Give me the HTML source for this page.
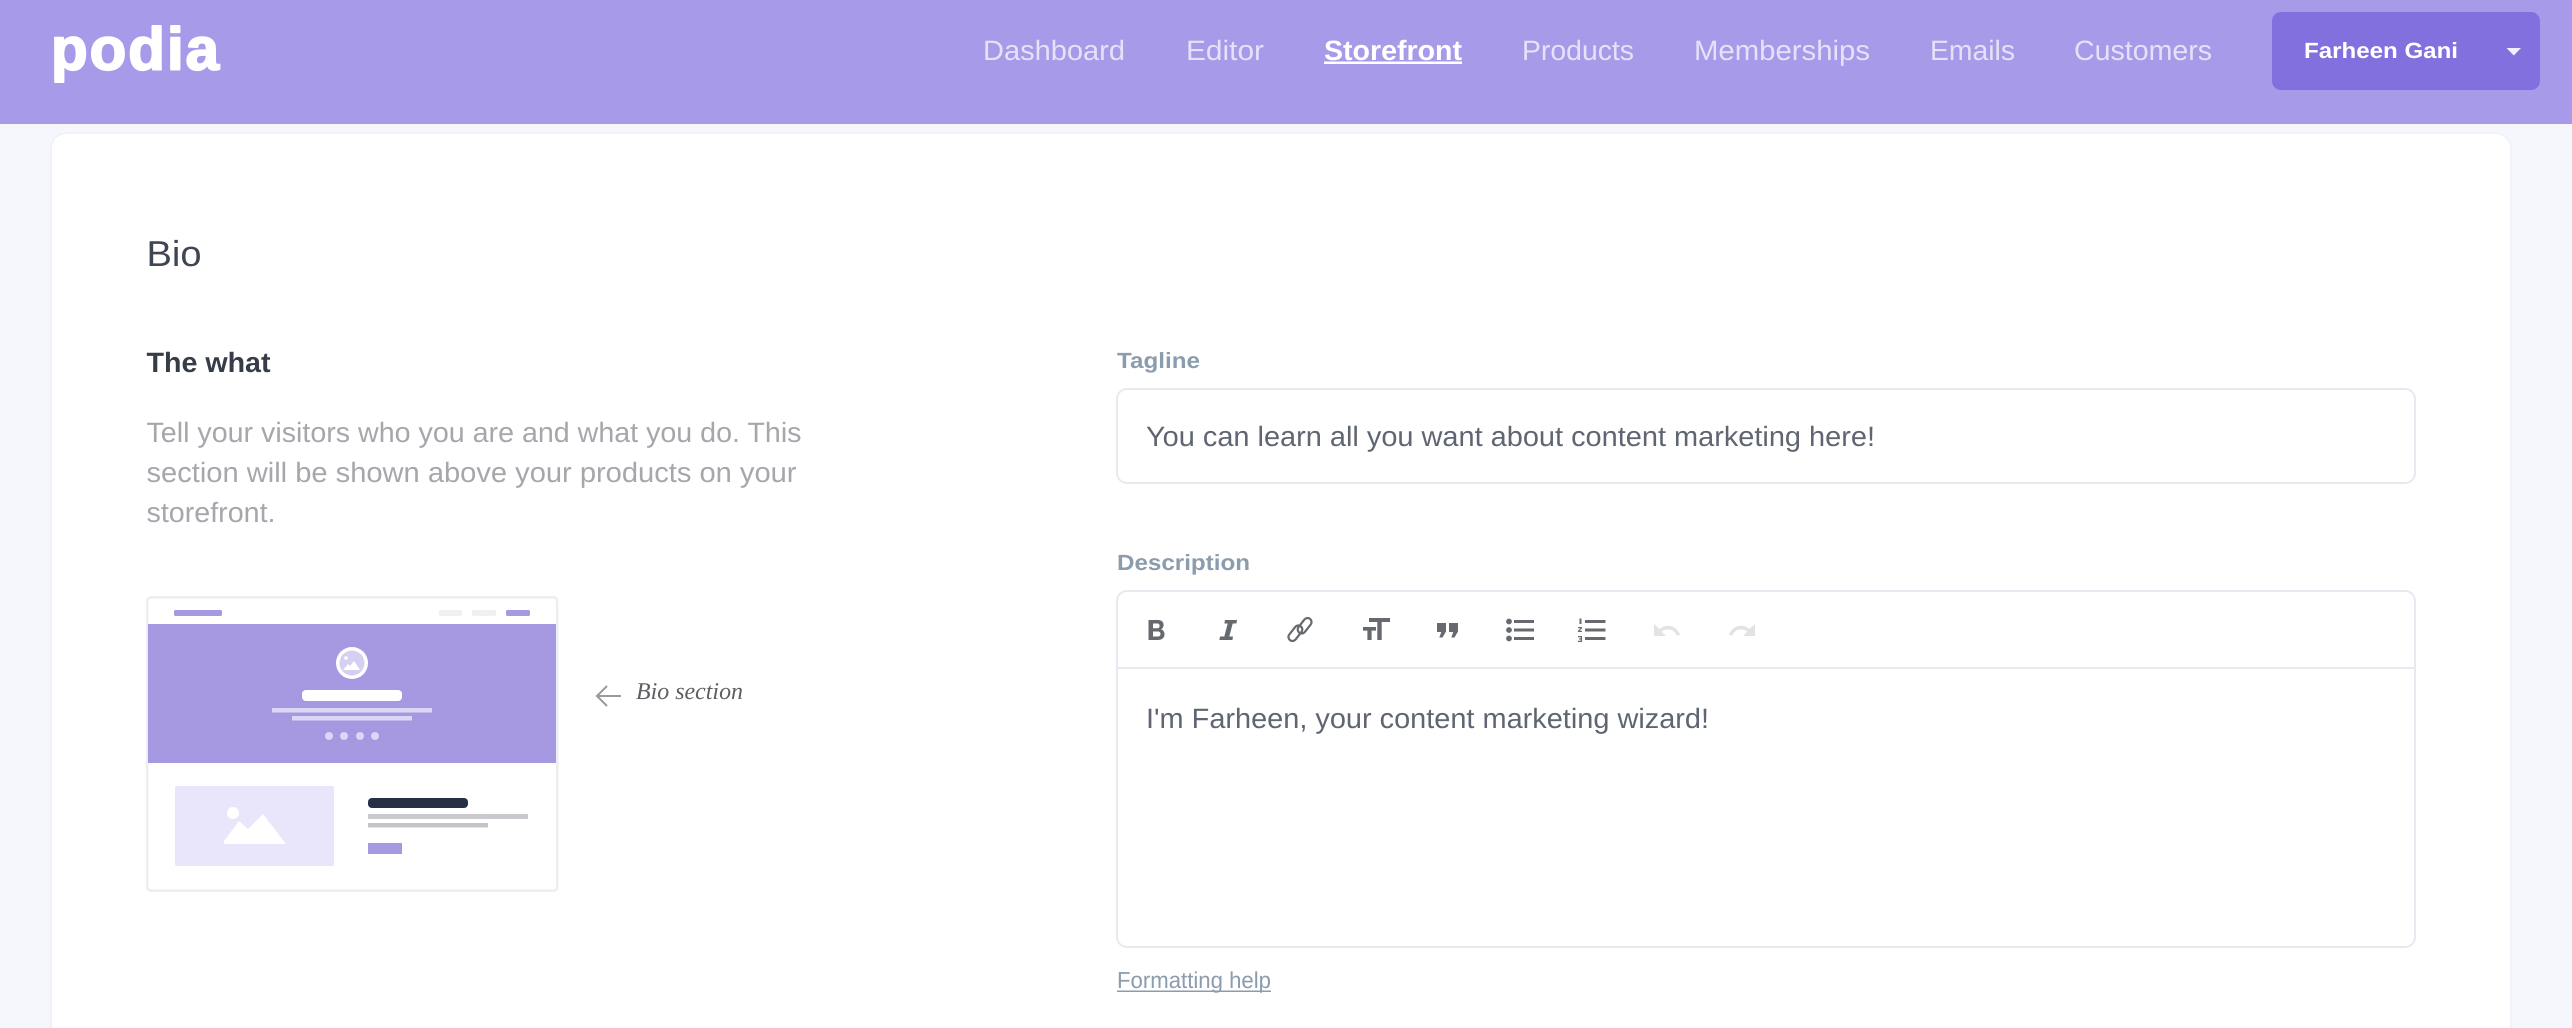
<!DOCTYPE html>
<html>
<head>
<meta charset="utf-8">
<title>Podia</title>
<style>
html,body{margin:0;padding:0;width:2572px;height:1028px;overflow:hidden;background:#f6f7fc}
svg{display:block}
text{font-family:"Liberation Sans",sans-serif;text-rendering:geometricPrecision}
.nav{font-size:28px;fill:#e5e1f8}
.para{font-size:28px;fill:#a6a7ac}
.val{font-size:28px;fill:#5f6672}
.lab{font-size:22px;font-weight:700;fill:#8b9cad}
</style>
</head>
<body>
<svg width="2572" height="1028" viewBox="0 0 2572 1028" xmlns="http://www.w3.org/2000/svg">
<!-- page -->
<rect width="2572" height="1028" fill="#f6f7fc"/>
<path d="M50.500 1028V148a15.500 15.500 0 0 1 15.500-15.500H2496a15.500 15.500 0 0 1 15.500 15.500V1028z" fill="#f0f1f8"/>
<path d="M52 1028V148a14 14 0 0 1 14-14H2496a14 14 0 0 1 14 14V1028z" fill="#fff"/>
<!-- header -->
<rect width="2572" height="124" fill="#a79ae8"/>
<text x="51" y="69.500" font-size="60" font-weight="700" fill="#fff" stroke="#fff" stroke-width="2" stroke-linejoin="round" textLength="168" lengthAdjust="spacing">podia</text>

<text class="nav" x="983" y="60" textLength="142" lengthAdjust="spacingAndGlyphs">Dashboard</text>
<text class="nav" x="1186" y="60" textLength="78" lengthAdjust="spacingAndGlyphs">Editor</text>
<text x="1324" y="60" font-size="28" font-weight="700" fill="#fff" textLength="138" lengthAdjust="spacingAndGlyphs">Storefront</text>
<rect x="1324" y="61.500" width="138" height="2.500" fill="#fff"/>
<text class="nav" x="1522" y="60" textLength="112" lengthAdjust="spacingAndGlyphs">Products</text>
<text class="nav" x="1694" y="60" textLength="176" lengthAdjust="spacingAndGlyphs">Memberships</text>
<text class="nav" x="1930" y="60" textLength="85" lengthAdjust="spacingAndGlyphs">Emails</text>
<text class="nav" x="2074" y="60" textLength="138" lengthAdjust="spacingAndGlyphs">Customers</text>

<rect x="2272" y="12" width="268" height="78" rx="9" fill="#8370df"/>
<text x="2304" y="58" font-size="22" font-weight="700" fill="#fff" textLength="154" lengthAdjust="spacingAndGlyphs">Farheen Gani</text>
<path d="M2506.500 48h14.500l-7.200 7.500z" fill="#f2f0fc"/>

<!-- left column -->
<text x="146.500" y="266" font-size="36" fill="#3f4653" textLength="55" lengthAdjust="spacingAndGlyphs">Bio</text>
<text x="146.500" y="372" font-size="28" font-weight="700" fill="#363c48" textLength="124" lengthAdjust="spacingAndGlyphs">The what</text>
<text class="para" x="146.500" y="442" textLength="655" lengthAdjust="spacingAndGlyphs">Tell your visitors who you are and what you do. This</text>
<text class="para" x="146.500" y="482" textLength="650" lengthAdjust="spacingAndGlyphs">section will be shown above your products on your</text>
<text class="para" x="146.500" y="522" textLength="129" lengthAdjust="spacingAndGlyphs">storefront.</text>

<!-- illustration -->
<rect x="147.200" y="597.200" width="410" height="293.600" rx="4" fill="#fff" stroke="#eceef1" stroke-width="2.500"/>
<rect x="174" y="610" width="48" height="6" rx="1.500" fill="#a699e2"/>
<rect x="439" y="610" width="23" height="6" rx="1.500" fill="#f0f0f2"/>
<rect x="472" y="610" width="24" height="6" rx="1.500" fill="#f0f0f2"/>
<rect x="506" y="610" width="24" height="6" rx="1.500" fill="#a699e2"/>
<rect x="148" y="624" width="408" height="139" fill="#a699e2"/>
<circle cx="352" cy="663" r="16" fill="#fff"/>
<circle cx="352" cy="663" r="12.500" fill="#d5cff3"/>
<circle cx="346" cy="658" r="1.800" fill="#fff"/>
<path d="M343 670l5-6 2 2 4-5 6 9z" fill="#fff"/>
<rect x="302" y="690" width="100" height="11" rx="4" fill="#fff"/>
<rect x="272" y="708" width="160" height="4.500" fill="#dcd7f4"/>
<rect x="292" y="716" width="120" height="4.500" fill="#dcd7f4"/>
<circle cx="329" cy="736" r="4" fill="#dcd7f4"/>
<circle cx="344" cy="736" r="4" fill="#dcd7f4"/>
<circle cx="360" cy="736" r="4" fill="#dcd7f4"/>
<circle cx="375" cy="736" r="4" fill="#dcd7f4"/>
<rect x="175" y="786" width="159" height="80" rx="2" fill="#e9e6fb"/>
<circle cx="233" cy="813" r="6" fill="#fff"/>
<path d="M224 844v-3l15-20 9 8 15-15 23 30z" fill="#fff"/>
<rect x="368" y="798" width="100" height="10" rx="4" fill="#253046"/>
<rect x="368" y="814" width="160" height="5" fill="#c9cacf"/>
<rect x="368" y="823" width="120" height="4.500" fill="#c4c5ca"/>
<rect x="368" y="843" width="34" height="11" fill="#a699e2"/>

<path d="M621 696H597M607 686l-10 10 10 10" fill="none" stroke="#9a9a9a" stroke-width="2"/>
<text x="636" y="699" font-size="24" font-style="italic" fill="#5e5e62" style='font-family:"Liberation Serif",serif' textLength="107" lengthAdjust="spacingAndGlyphs">Bio section</text>

<!-- tagline -->
<text class="lab" x="1117" y="368" textLength="83" lengthAdjust="spacingAndGlyphs">Tagline</text>
<rect x="1117" y="389" width="1298" height="94" rx="10" fill="#fff" stroke="#e8e8f0" stroke-width="2"/>
<text class="val" x="1146" y="446" textLength="729" lengthAdjust="spacingAndGlyphs">You can learn all you want about content marketing here!</text>

<!-- description -->
<text class="lab" x="1117" y="570" textLength="133" lengthAdjust="spacingAndGlyphs">Description</text>
<rect x="1117" y="591" width="1298" height="356" rx="10" fill="#fff" stroke="#e8e8f0" stroke-width="2"/>
<rect x="1117" y="667" width="1298" height="2" fill="#e8e8f0"/>
<text class="val" x="1146" y="728" textLength="563" lengthAdjust="spacingAndGlyphs">I'm Farheen, your content marketing wizard!</text>

<!-- toolbar icons -->
<g fill="#666a6e">
<path fill-rule="evenodd" d="M1148.500 620h9.500c3.600 0 5.600 2 5.600 5 0 2-1 3.500-2.600 4.300 2.200.7 3.500 2.500 3.500 4.900 0 3.600-2.600 5.800-6.500 5.800h-9.500zM1153 623.500v4.800h4.300c1.500 0 2.300-1 2.300-2.400s-.8-2.400-2.300-2.400zM1153 631.500v5h5c1.600 0 2.500-1 2.500-2.500s-.9-2.500-2.500-2.500z"/>
<path d="M1225 620h12l-.6 3.500h-3.700l-3.400 13h3.700l-.6 3.500h-13l.6-3.500h4.300l3.400-13h-3.300z"/>
<path d="M1369 618h21v4h-8.300v18h-4.400v-18H1369z"/>
<path d="M1363 627h13v3.600h-4.400V640h-4.200v-9.400H1363z"/>
<path d="M1437 623h9v8.500l-3.500 6h-3.200l2-5.500H1437z"/>
<path d="M1449 623h9v8.500l-3.500 6h-3.200l2-5.500H1449z"/>
<circle cx="1509" cy="621.500" r="2.900"/><circle cx="1509" cy="630" r="2.900"/><circle cx="1509" cy="638.500" r="2.900"/>
<rect x="1514" y="620" width="20" height="3"/><rect x="1514" y="628.500" width="20" height="3"/><rect x="1514" y="637" width="20" height="3"/>
<rect x="1585" y="620" width="20.500" height="3"/><rect x="1585" y="628.500" width="20.500" height="3"/><rect x="1585" y="637" width="20.500" height="3"/>
<rect x="1579.500" y="618.500" width="2" height="5.500"/>
<path d="M1578 627h4v1.200l-2.500 2.600h2.500v1.200h-4v-1.200l2.500-2.600H1578z"/>
<path d="M1578 636h4v6h-4v-1.200h2.700v-1.300H1579v-1.100h1.700v-1.200H1578z"/>
</g>
<g fill="none" stroke="#666a6e" stroke-width="2.200" stroke-linejoin="round">
<rect x="-6.500" y="-4" width="17.500" height="8" rx="4" transform="translate(1294 635) rotate(-52)"/>
<rect x="-11" y="-4" width="17.500" height="8" rx="4" transform="translate(1306 624) rotate(-52)"/>
</g>
<path d="M1654 624v12h12l-4.300-4.300c1.800-1.500 4-2.300 6.300-2.300 4 0 7.500 2.600 8.800 6.400l3.200-1c-1.700-5.300-6.600-9.100-12-9.100-3.200 0-6.100 1.200-8.400 3.200z" fill="#e3e3e4"/>
<path d="M1755 624v12h-12l4.300-4.300c-1.800-1.500-4-2.300-6.300-2.300-4 0-7.500 2.600-8.800 6.400l-3.200-1c1.700-5.300 6.600-9.100 12-9.100 3.200 0 6.100 1.200 8.400 3.200z" fill="#e3e3e4"/>

<!-- help link -->
<text x="1117" y="988" font-size="23" fill="#8b9cad" textLength="154" lengthAdjust="spacingAndGlyphs">Formatting help</text>
<rect x="1117" y="990.500" width="154" height="1.500" fill="#8b9cad"/>
</svg>
</body>
</html>
